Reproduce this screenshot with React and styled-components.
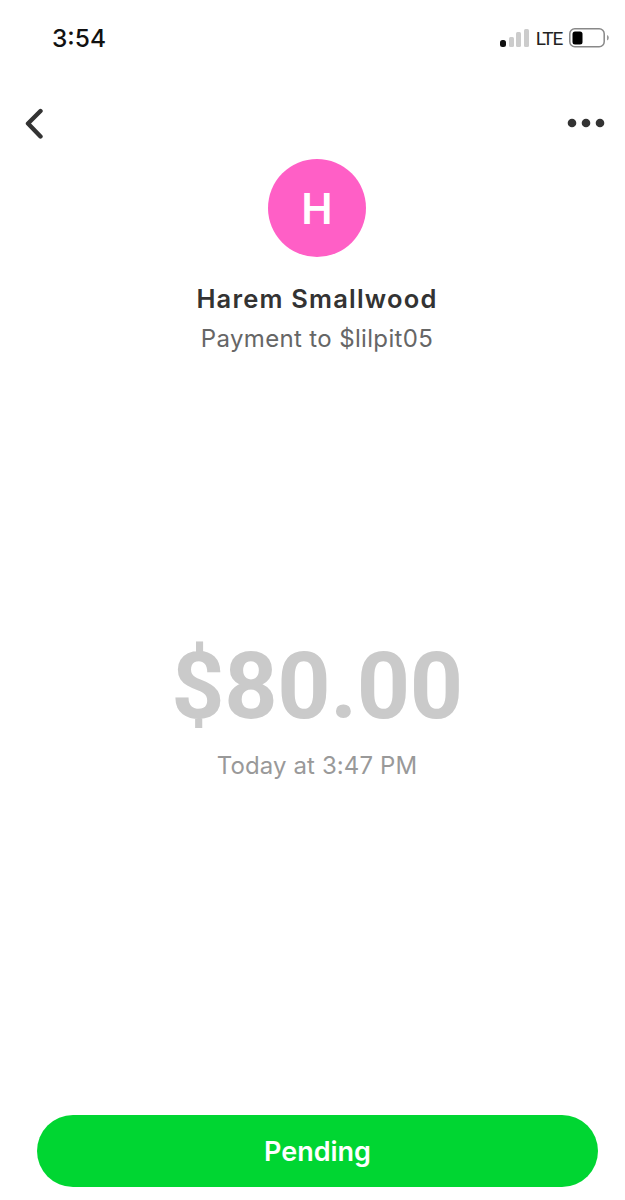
import React from "react";
import styled, { createGlobalStyle } from "styled-components";

const Global = createGlobalStyle`
  html, body { margin: 0; padding: 0; background: #fff; }
  body { font-family: Inter, "Liberation Sans", sans-serif; }
`;

const Screen = styled.div`
  width: 625px;
  height: 1200px;
  display: flex;
  flex-direction: column;
  background: #fff;
  overflow: hidden;
`;

const StatusBar = styled.div`
  height: 76px;
  display: flex;
  align-items: center;
  justify-content: space-between;
  padding: 0 16px 0 52px;
  box-sizing: border-box;
`;

const Clock = styled.div`
  font-size: 24.5px;
  font-weight: 500;
  color: #111;
`;

const StatusRight = styled.div`
  display: flex;
  align-items: center;
  gap: 7px;
`;

const Carrier = styled.div`
  font-family: "Liberation Sans Narrow", Roboto, sans-serif;
  font-size: 19px;
  letter-spacing: -1.2px;
  color: #222;
`;

const NavBar = styled.div`
  height: 83px;
  display: flex;
  align-items: flex-start;
  justify-content: space-between;
  padding: 32px 20px 0 25px;
  box-sizing: border-box;
`;

const Content = styled.div`
  padding-left: 9px;
  display: flex;
  flex-direction: column;
  align-items: center;
`;

const Avatar = styled.div`
  width: 98px;
  height: 98px;
  border-radius: 50%;
  background: #ff5fc6;
  color: #fff;
  display: flex;
  align-items: center;
  justify-content: center;
  font-size: 42px;
  font-weight: 600;
`;

const Name = styled.div`
  margin-top: 26px;
  font-size: 25.5px;
  line-height: 32px;
  font-weight: 600;
  letter-spacing: 1.2px;
  color: #333;
`;

const Subtitle = styled.div`
  margin-top: 8px;
  font-size: 24px;
  line-height: 32px;
  font-weight: 400;
  letter-spacing: 0.35px;
  color: #666;
`;

const Amount = styled.div`
  margin-top: 277px;
  font-family: Roboto, Inter, sans-serif;
  font-size: 93px;
  line-height: 110px;
  font-weight: 700;
  letter-spacing: -0.4px;
  color: #cacaca;
`;

const Timestamp = styled.div`
  margin-top: 8px;
  font-size: 24px;
  line-height: 32px;
  letter-spacing: 0.12px;
  color: #999;
`;

const Footer = styled.div`
  margin-top: auto;
  padding: 0 27px 13px 37px;
`;

const PrimaryButton = styled.div`
  height: 72px;
  border-radius: 36px;
  background: #00d632;
  color: #fff;
  display: flex;
  align-items: center;
  justify-content: center;
  font-size: 27px;
  font-weight: 600;
`;

const Signal = () => (
  <svg width="29" height="20" viewBox="0 0 29 20">
    <rect x="0" y="12" width="6" height="7" rx="2.5" fill="#111" />
    <rect x="9" y="9" width="5" height="10" rx="1.5" fill="#ccc" />
    <rect x="16" y="4" width="5" height="15" rx="1.5" fill="#ccc" />
    <rect x="24" y="1" width="5" height="18" rx="1.5" fill="#ccc" />
  </svg>
);

const Battery = () => (
  <svg width="40" height="20" viewBox="0 0 40 20">
    <rect x="0.8" y="0.8" width="34.4" height="18" rx="5" fill="none" stroke="#888" strokeWidth="1.5" />
    <rect x="3.5" y="3.5" width="10" height="13" rx="2.5" fill="#000" />
    <path d="M38 7 a3 3 0 0 1 0 5.5z" fill="#999" />
  </svg>
);

const Back = () => (
  <svg width="20" height="32" viewBox="0 0 20 32">
    <path d="M15.5 3 L3 15.5 L15.5 28.5" fill="none" stroke="#333" strokeWidth="4.4" strokeLinecap="round" strokeLinejoin="round" />
  </svg>
);

const More = () => (
  <svg width="38" height="12" viewBox="0 0 38 12" style={{ marginTop: 9 }}>
    <circle cx="5" cy="6" r="4.3" fill="#333" />
    <circle cx="19" cy="6" r="4.3" fill="#333" />
    <circle cx="33" cy="6" r="4.3" fill="#333" />
  </svg>
);

export default function App() {
  return (
    <Screen>
      <Global />
      <StatusBar>
        <Clock>3:54</Clock>
        <StatusRight>
          <Signal />
          <Carrier>LTE</Carrier>
          <Battery />
        </StatusRight>
      </StatusBar>
      <NavBar>
        <Back />
        <More />
      </NavBar>
      <Content>
        <Avatar>H</Avatar>
        <Name>Harem Smallwood</Name>
        <Subtitle>Payment to $lilpit05</Subtitle>
        <Amount>$80.00</Amount>
        <Timestamp>Today at 3:47 PM</Timestamp>
      </Content>
      <Footer>
        <PrimaryButton>Pending</PrimaryButton>
      </Footer>
    </Screen>
  );
}
